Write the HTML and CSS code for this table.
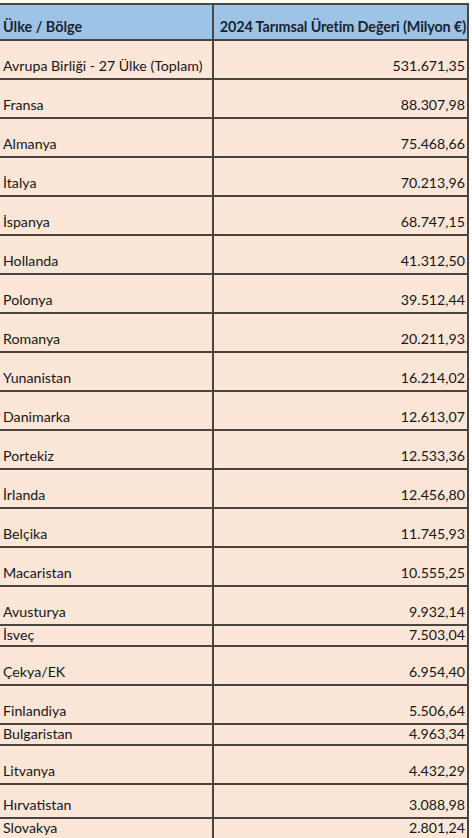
FILE: index.html
```html
<!DOCTYPE html>
<html lang="tr">

<head>
    <meta charset="utf-8">
    <meta name="viewport" content="width=device-width, initial-scale=1.0">
    <title>2024 Tarımsal Üretim Değeri</title>
    <link rel="stylesheet" href="styles.css">
</head>

<body>

    <table class="tablo">
        <thead>
            <tr class="baslik">
                <th class="ulke">Ülke / Bölge</th>
                <th class="deger">2024 Tarımsal Üretim Değeri (Milyon €)</th>
            </tr>
        </thead>
        <tbody>
            <tr class="uzun"><td class="ulke">Avrupa Birliği - 27 Ülke (Toplam)</td><td class="deger">531.671,35</td></tr>
            <tr class="uzun"><td class="ulke">Fransa</td><td class="deger">88.307,98</td></tr>
            <tr class="uzun"><td class="ulke">Almanya</td><td class="deger">75.468,66</td></tr>
            <tr class="uzun"><td class="ulke">İtalya</td><td class="deger">70.213,96</td></tr>
            <tr class="uzun"><td class="ulke">İspanya</td><td class="deger">68.747,15</td></tr>
            <tr class="uzun"><td class="ulke">Hollanda</td><td class="deger">41.312,50</td></tr>
            <tr class="uzun"><td class="ulke">Polonya</td><td class="deger">39.512,44</td></tr>
            <tr class="uzun"><td class="ulke">Romanya</td><td class="deger">20.211,93</td></tr>
            <tr class="uzun"><td class="ulke">Yunanistan</td><td class="deger">16.214,02</td></tr>
            <tr class="uzun"><td class="ulke">Danimarka</td><td class="deger">12.613,07</td></tr>
            <tr class="uzun"><td class="ulke">Portekiz</td><td class="deger">12.533,36</td></tr>
            <tr class="uzun"><td class="ulke">İrlanda</td><td class="deger">12.456,80</td></tr>
            <tr class="uzun"><td class="ulke">Belçika</td><td class="deger">11.745,93</td></tr>
            <tr class="uzun"><td class="ulke">Macaristan</td><td class="deger">10.555,25</td></tr>
            <tr class="uzun"><td class="ulke">Avusturya</td><td class="deger">9.932,14</td></tr>
            <tr class="kisa"><td class="ulke">İsveç</td><td class="deger">7.503,04</td></tr>
            <tr class="uzun"><td class="ulke">Çekya/EK</td><td class="deger">6.954,40</td></tr>
            <tr class="uzun"><td class="ulke">Finlandiya</td><td class="deger">5.506,64</td></tr>
            <tr class="kisa"><td class="ulke">Bulgaristan</td><td class="deger">4.963,34</td></tr>
            <tr class="uzun"><td class="ulke">Litvanya</td><td class="deger">4.432,29</td></tr>
            <tr class="orta"><td class="ulke">Hırvatistan</td><td class="deger">3.088,98</td></tr>
            <tr class="kisa"><td class="ulke">Slovakya</td><td class="deger">2.801,24</td></tr>
        </tbody>
    </table>

</body>

</html>
```

FILE: styles.css
```css
*,
body * {
    box-sizing: border-box;
}

body {
    margin: 0;
    padding: 0;
    background-color: #fff;
    font-family: Lato, "Liberation Sans", sans-serif;
    color: #161616;
}

.tablo {
    margin-top: 3px;
    width: 469px;
    border-collapse: collapse;
    table-layout: fixed;
    font-size: 14.2px;
}

.tablo th,
.tablo td {
    border: 2px solid #4a463f;
    padding: 0 2px 4px 3px;
    vertical-align: bottom;
    line-height: 16px;
    white-space: nowrap;
    overflow: hidden;
}

.tablo .ulke {
    width: 213px;
    border-left: none;
    text-align: left;
}

.tablo .deger {
    text-align: right;
}

.baslik th {
    height: 36px;
    background-color: #9dc3e6;
    font-weight: bold;
    font-size: 14.4px;
    color: #1a2430;
}

.baslik .deger {
    padding: 0 1px 4px 0;
    letter-spacing: -0.12px;
}

tbody td {
    background-color: #fce6d8;
}

.uzun td {
    height: 39px;
}

.orta td {
    height: 34px;
}

.kisa td {
    height: 21px;
    padding-bottom: 2px;
}
```
